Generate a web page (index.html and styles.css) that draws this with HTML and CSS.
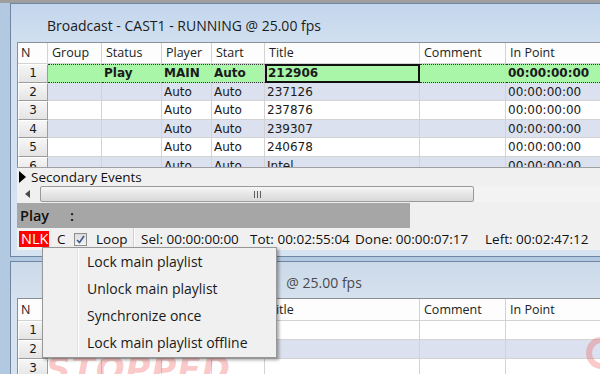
FILE: index.html
```html
<!DOCTYPE html>
<html>
<head>
<meta charset="utf-8">
<link rel="stylesheet" href="styles.css">
</head>
<body>
<div class="desk">
  <div class="win w1">
    <div class="titlebar">Broadcast - CAST1 - RUNNING @ 25.00 fps</div>
    <div class="client">
      <div class="grid">
        <div class="row head">
          <div class="c n">N</div><div class="c">Group</div><div class="c">Status</div><div class="c">Player</div><div class="c">Start</div><div class="c">Title</div><div class="c">Comment</div><div class="c">In Point</div>
        </div>
        <div class="row on">
          <div class="c n">1</div><div class="c"></div><div class="c">Play</div><div class="c">MAIN</div><div class="c">Auto</div><div class="c focus">212906</div><div class="c"></div><div class="c">00:00:00:00</div>
        </div>
        <div class="row alt">
          <div class="c n">2</div><div class="c"></div><div class="c"></div><div class="c">Auto</div><div class="c">Auto</div><div class="c">237126</div><div class="c"></div><div class="c">00:00:00:00</div>
        </div>
        <div class="row">
          <div class="c n">3</div><div class="c"></div><div class="c"></div><div class="c">Auto</div><div class="c">Auto</div><div class="c">237876</div><div class="c"></div><div class="c">00:00:00:00</div>
        </div>
        <div class="row alt">
          <div class="c n">4</div><div class="c"></div><div class="c"></div><div class="c">Auto</div><div class="c">Auto</div><div class="c">239307</div><div class="c"></div><div class="c">00:00:00:00</div>
        </div>
        <div class="row">
          <div class="c n">5</div><div class="c"></div><div class="c"></div><div class="c">Auto</div><div class="c">Auto</div><div class="c">240678</div><div class="c"></div><div class="c">00:00:00:00</div>
        </div>
        <div class="row alt">
          <div class="c n">6</div><div class="c"></div><div class="c"></div><div class="c">Auto</div><div class="c">Auto</div><div class="c">Intel</div><div class="c"></div><div class="c">00:00:00:00</div>
        </div>
      </div>
      <div class="secondary">
        <svg class="tri" width="7" height="12" viewBox="0 0 7 12"><polygon points="0,0 7,6 0,12" fill="#000"/></svg>
        <span>Secondary Events</span>
      </div>
      <div class="hscroll">
        <div class="sbtn"><svg width="5" height="8" viewBox="0 0 5 8"><polygon points="5,0 0,4 5,8" fill="#4a4a4a"/></svg></div>
        <div class="thumb"><span class="grip"></span><span class="grip"></span><span class="grip"></span></div>
        <div class="track"></div>
      </div>
      <div class="playbar">
        <div class="playlabel"><span class="pl">Play</span><span class="colon">:</span></div>
      </div>
      <div class="status">
        <span class="nlk">NLK</span>
        <span class="st-c">C</span>
        <span class="chk"><svg width="11" height="11" viewBox="0 0 11 11"><path d="M2 6 L4.5 8.5 L9 2" stroke="#3d5a8c" stroke-width="1.6" fill="none"/></svg></span>
        <span class="loop">Loop</span>
        <span class="sep"></span>
        <span class="sel">Sel: 00:00:00:00</span>
        <span class="tot">Tot: 00:02:55:04</span>
        <span class="done">Done: 00:00:07:17</span>
        <span class="left">Left: 00:02:47:12</span>
      </div>
    </div>
  </div>

  <div class="win w2">
    <div class="titlebar t2"><span>Broadcast - CAST2 - STOPPED</span><span class="fps">@ 25.00 fps</span></div>
    <div class="client">
      <div class="grid g2">
        <div class="row head h2">
          <div class="c n">N</div><div class="c">Group</div><div class="c">Status</div><div class="c">Player</div><div class="c">Start</div><div class="c">Title</div><div class="c">Comment</div><div class="c">In Point</div>
        </div>
        <div class="row r2">
          <div class="c n">1</div><div class="c"></div><div class="c"></div><div class="c"></div><div class="c"></div><div class="c"></div><div class="c"></div><div class="c"></div>
        </div>
        <div class="row r2 alt">
          <div class="c n">2</div><div class="c"></div><div class="c"></div><div class="c"></div><div class="c"></div><div class="c"></div><div class="c"></div><div class="c"></div>
        </div>
        <div class="row r2">
          <div class="c n">3</div><div class="c"></div><div class="c"></div><div class="c"></div><div class="c"></div><div class="c"></div><div class="c"></div><div class="c"></div>
        </div>
        <div class="watermark">STOPPED</div>
        <div class="watermark2"></div>
      </div>
    </div>
  </div>

  <div class="menu">
    <div class="mi">Lock main playlist</div>
    <div class="mi">Unlock main playlist</div>
    <div class="mi">Synchronize once</div>
    <div class="mi">Lock main playlist offline</div>
  </div>
</div>
</body>
</html>
```

FILE: styles.css
```css
html, body {
  margin: 0;
  padding: 0;
}
body {
  width: 600px;
  height: 374px;
  overflow: hidden;
  background: #b3c8e1;
  font-family: "Open Sans", "Noto Sans", sans-serif;
  color: #1a1a1a;
}
.desk {
  position: relative;
  width: 600px;
  height: 374px;
  border-top: 3px solid #9e9e9e;
  box-sizing: border-box;
}
.win {
  margin-left: 10px;
  width: 620px;
  border: 1px solid #6f86a3;
  background: linear-gradient(#c3d6ed, #d2e0f0 40px, #d6e3f1);
  box-sizing: border-box;
}
.w1 {
  height: 254px;
}
.w2 {
  margin-top: 4px;
  height: 120px;
  background: linear-gradient(#cbd9e9, #d7e2ee 40px);
}
.titlebar {
  height: 38px;
  padding-left: 36px;
  padding-top: 5px;
  box-sizing: border-box;
  display: flex;
  align-items: center;
  font-size: 14px;
  color: #1b1b1b;
  white-space: nowrap;
}
.t2 {
  height: 36px;
  color: #4a4a4a;
}
.t2 .fps {
  margin-left: 48px;
}
.client {
  margin-left: 6px;
  background: #f0f0f0;
}
.grid {
  height: 125px;
  overflow: hidden;
  border-top: 1px solid #8a8f96;
  border-left: 1px solid #8a8f96;
  background: #fff;
  box-sizing: border-box;
  position: relative;
}
.row {
  display: grid;
  grid-template-columns: 30px 54px 60px 50px 53px 155px 86px 120px;
  height: 18.6px;
  font-family: "DejaVu Sans", sans-serif;
  font-size: 12px;
  background: #fff;
}
.row.alt {
  background: #dbe1ee;
}
.c {
  border-right: 1px solid #d3d3d3;
  border-bottom: 1px solid #d3d3d3;
  box-sizing: border-box;
  padding-left: 2px;
  line-height: 18px;
  white-space: nowrap;
  overflow: hidden;
}
.c.n {
  background: linear-gradient(#f6f6f6, #e4e4e4);
  border-top: 1px solid #fff;
  border-left: 1px solid #fff;
  border-right: 1px solid #9c9c9c;
  border-bottom: 1px solid #9c9c9c;
  text-align: center;
  padding-left: 0;
  line-height: 16px;
}
.row.head {
  height: 21px;
  font-family: "Open Sans", sans-serif;
  font-size: 12.5px;
  background: #fdfdfd;
}
.row.head .c {
  line-height: 20px;
  padding-left: 4px;
  color: #222;
}
.row.head .c.n {
  background: #fdfdfd;
  border: none;
  border-right: 1px solid #d3d3d3;
  border-bottom: 1px solid #d3d3d3;
  text-align: left;
  padding-left: 3px;
}
.row.on {
  background: #a9f6a9;
  font-weight: bold;
}
.row.on .c {
  border-top: 1px dotted #333;
  border-bottom: 1px dotted #333;
  line-height: 16px;
}
.row.on .c.n {
  border-top: 1px solid #fff;
  border-bottom: 1px solid #9c9c9c;
  font-weight: normal;
}
.row.on .c.focus {
  border: 2px solid #111;
  line-height: 14px;
  padding-left: 1px;
}
.secondary {
  height: 18px;
  display: flex;
  align-items: center;
  border-top: 1px solid #a0a0a0;
  box-sizing: border-box;
  background: #f0f0f0;
  font-size: 13.5px;
  color: #111;
  line-height: 16px;
}
.secondary .tri {
  margin-left: 2px;
  margin-right: 5px;
}
.hscroll {
  height: 18px;
  display: flex;
  align-items: stretch;
  background: #f0f0f0;
  padding: 1px 0;
  box-sizing: border-box;
}
.sbtn {
  width: 21px;
  display: flex;
  align-items: center;
  justify-content: center;
}
.thumb {
  width: 434px;
  margin-left: 2px;
  border: 1px solid #9a9a9a;
  border-radius: 2px;
  background: linear-gradient(#f7f7f7, #e6e6e6 50%, #d9d9d9);
  display: flex;
  align-items: center;
  justify-content: center;
  gap: 2px;
  box-sizing: border-box;
}
.grip {
  width: 1px;
  height: 7px;
  background: #5d5d5d;
}
.track {
  flex: 1;
  background: #f3f3f3;
}
.playbar {
  height: 25px;
  display: flex;
  background: #f0f0f0;
}
.playlabel {
  width: 393px;
  background: #a6a6a6;
  display: flex;
  align-items: center;
  font-size: 14.5px;
  font-weight: 600;
  color: #111;
}
.pl {
  margin-left: 3px;
  width: 50px;
}
.status {
  height: 22px;
  display: flex;
  align-items: center;
  background: #f0f0f0;
  font-size: 13.5px;
  color: #111;
  white-space: nowrap;
}
.nlk {
  margin-left: 2px;
  width: 30px;
  height: 16px;
  background: #ff0000;
  color: #fff;
  font-size: 14.5px;
  line-height: 16px;
  padding-left: 2px;
  box-sizing: border-box;
  overflow: hidden;
}
.st-c {
  margin-left: 8px;
  width: 17px;
}
.chk {
  width: 13px;
  height: 13px;
  border: 1px solid #8e8f8f;
  box-sizing: border-box;
  background: linear-gradient(#dcdcdc, #f4f4f4);
  display: flex;
  align-items: center;
  justify-content: center;
}
.loop {
  margin-left: 9px;
  width: 37px;
}
.sep {
  width: 1px;
  height: 22px;
  background: #cfcfcf;
  box-shadow: 1px 0 0 #fff;
}
.sel {
  margin-left: 7px;
  width: 109px;
}
.tot {
  width: 105px;
}
.done {
  width: 130px;
}
.left {
  width: 110px;
}
.g2 {
  height: 80px;
}
.row.h2 {
  height: 22px;
}
.row.h2 .c {
  line-height: 21px;
}
.row.r2 {
  height: 19px;
}
.watermark {
  position: absolute;
  left: 28px;
  top: 50px;
  font-family: "DejaVu Sans", sans-serif;
  font-size: 34px;
  font-weight: bold;
  font-style: italic;
  color: rgba(240, 70, 70, 0.3);
  letter-spacing: 1px;
  pointer-events: none;
}
.watermark2 {
  position: absolute;
  left: 568px;
  top: 38px;
  width: 30px;
  height: 32px;
  border-radius: 50%;
  border: 6px solid rgba(240, 80, 80, 0.3);
  box-sizing: border-box;
}
.menu {
  position: absolute;
  left: 42px;
  top: 244px;
  width: 235px;
  height: 111px;
  box-sizing: border-box;
  border: 1px solid #979797;
  background: #f0f0f0;
  box-shadow: 2px 2px 3px rgba(0, 0, 0, 0.35);
  padding: 0 2px 2px;
  font-size: 14px;
  color: #1a1a1a;
}
.menu::before {
  content: "";
  position: absolute;
  left: 34px;
  top: 1px;
  bottom: 1px;
  width: 1px;
  background: #e0e0e0;
  box-shadow: 1px 0 0 #fff;
}
.mi {
  height: 27px;
  line-height: 27px;
  padding-left: 42px;
  white-space: nowrap;
}
```
